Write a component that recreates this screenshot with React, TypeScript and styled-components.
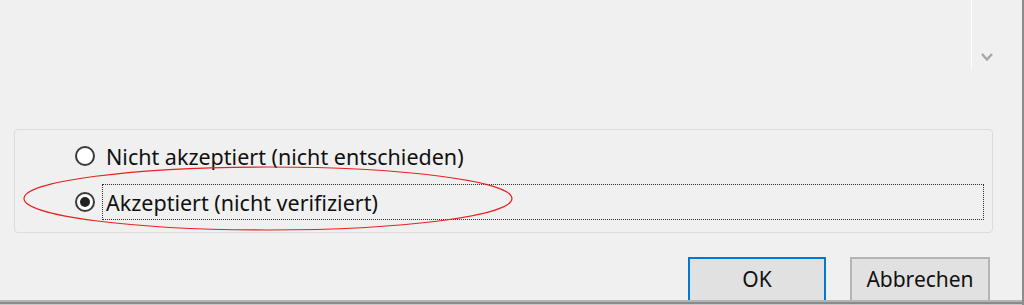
import styled, { createGlobalStyle } from "styled-components";

const GlobalStyle = createGlobalStyle`
  html, body {
    margin: 0;
    padding: 0;
    background: #f0f0f0;
  }
  * {
    box-sizing: border-box;
  }
`;

const Window = styled.div`
  position: relative;
  width: 1024px;
  height: 305px;
  overflow: hidden;
  background: #f0f0f0;
  border-right: 2px solid #8c8c8c;
  font-family: "Noto Sans", "Open Sans", Arial, sans-serif;
  color: #111;
  display: flex;
  flex-direction: column;
`;

const TopArea = styled.div`
  height: 72px;
  display: flex;
  padding-right: 21px;
`;

const ListArea = styled.div`
  flex: 1;
`;

const ScrollTrack = styled.div`
  width: 30px;
  border-left: 1px solid #fcfcfc;
  display: flex;
  justify-content: center;
  padding-top: 53px;
`;

const GroupBox = styled.div`
  margin: 59px 0 0 14px;
  width: 979px;
  height: 107px;
  border: 1px solid #dcdcdc;
  border-radius: 4px;
  padding: 8px 8px 0 60px;
  display: flex;
  flex-direction: column;
  gap: 10px;
`;

const RadioRow = styled.label`
  height: 36px;
  display: flex;
  align-items: center;
  gap: 7px;
`;

const RadioCircle = styled.span<{ checked?: boolean }>`
  width: 20px;
  height: 20px;
  border-radius: 50%;
  border: 2px solid #3a3a3a;
  background: #fff;
  display: flex;
  align-items: center;
  justify-content: center;
  flex-shrink: 0;

  &::after {
    content: "";
    display: ${(p) => (p.checked ? "block" : "none")};
    width: 10px;
    height: 10px;
    border-radius: 50%;
    background: #222;
  }
`;

const RadioText = styled.span<{ focused?: boolean }>`
  flex: 1;
  height: 36px;
  display: flex;
  align-items: center;
  padding: 2px 0 0 3px;
  font-size: 21.5px;
  border: 1px dotted ${(p) => (p.focused ? "#333" : "transparent")};
`;

const ButtonRow = styled.div`
  margin-top: 24px;
  display: flex;
  justify-content: flex-end;
  gap: 24px;
  padding-right: 32px;
`;

const DialogButton = styled.button<{ primary?: boolean }>`
  width: ${(p) => (p.primary ? "138px" : "140px")};
  height: 48px;
  background: #e1e1e1;
  border: 2px solid ${(p) => (p.primary ? "#0078d7" : "#b4b4b4")};
  font-family: "Noto Sans", "Open Sans", Arial, sans-serif;
  font-size: 21px;
  color: #111;
  padding: 0 0 4px;
`;

const BottomEdge = styled.div`
  position: absolute;
  left: 0;
  right: 0;
  top: 300px;
  height: 5px;
  background: linear-gradient(#b4b4b4 0 2px, #8a8a8a 2px 4px, #c8c8c8 4px);
`;

const Annotation = styled.svg`
  position: absolute;
  left: 0;
  top: 0;
  pointer-events: none;
`;

export default function App() {
  return (
    <>
      <GlobalStyle />
      <Window>
        <TopArea>
          <ListArea />
          <ScrollTrack>
            <svg width="12" height="8" viewBox="0 0 12 8">
              <polyline points="1,1 6,6.5 11,1" fill="none" stroke="#a8a8a8" strokeWidth="2.4" />
            </svg>
          </ScrollTrack>
        </TopArea>
        <GroupBox>
          <RadioRow>
            <RadioCircle />
            <RadioText>Nicht akzeptiert (nicht entschieden)</RadioText>
          </RadioRow>
          <RadioRow>
            <RadioCircle checked />
            <RadioText focused>Akzeptiert (nicht verifiziert)</RadioText>
          </RadioRow>
        </GroupBox>
        <ButtonRow>
          <DialogButton primary>OK</DialogButton>
          <DialogButton>Abbrechen</DialogButton>
        </ButtonRow>
        <BottomEdge />
        <Annotation width="1024" height="305">
          <ellipse cx="268" cy="198.5" rx="244" ry="31.5" fill="none" stroke="#e82020" strokeWidth="1.2" />
        </Annotation>
      </Window>
    </>
  );
}
